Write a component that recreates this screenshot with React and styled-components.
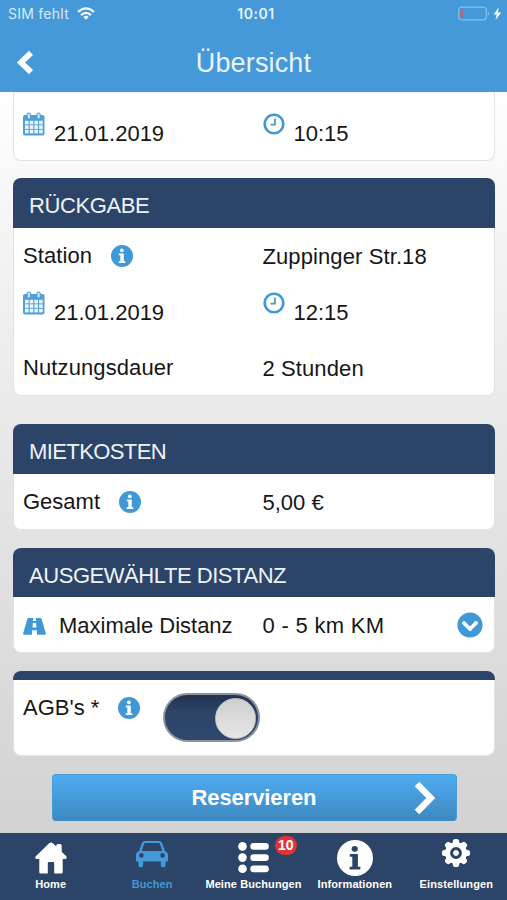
import styled, { createGlobalStyle } from "styled-components"
import { FaChevronCircleDown } from "react-icons/fa"


const GlobalStyle = createGlobalStyle`
    * {
        box-sizing: border-box;
    }

    body {
        margin: 0;
        font-family: "Liberation Sans", Arial, sans-serif;
        color: #161616;
    }
`

const Screen = styled.div`
    display: flex;
    flex-direction: column;
    width: 507px;
    height: 900px;
    overflow: hidden;
    background: linear-gradient(#ffffff 90px, #f7f7f7 190px, #e9e9e9 420px, #dcdcdc 660px, #d2d2d2 833px);
`

const Header = styled.header`
    height: 92px;
    flex-shrink: 0;
    background-color: #4599d9;
    color: white;
`

const StatusBar = styled.div`
    display: grid;
    grid-template-columns: 1fr auto 1fr;
    align-items: center;
    height: 27px;
    padding: 0 5px 0 8px;
    font-family: Inter, "Liberation Sans", sans-serif;
    font-size: 14px;
`

const Carrier = styled.div`
    display: flex;
    align-items: center;
    gap: 8px;
    color: #d9ebf9;
    letter-spacing: .25px;
`

const Clock = styled.div`
    padding-left: 2px;
    font-weight: 600;
    letter-spacing: .5px;
    color: #e6f2fb;
`

const Battery = styled.div`
    display: flex;
    justify-content: flex-end;
    align-items: center;
    margin-right: -3px;
`

const TitleBar = styled.div`
    display: grid;
    grid-template-columns: 60px 1fr 60px;
    align-items: center;
    height: 70px;

    h1 {
        margin: 0;
        padding-top: 2px;
        text-align: center;
        font-size: 27px;
        line-height: 30px;
        font-weight: 400;
        letter-spacing: .15px;
        color: #e8f3fc;
    }
`

const BackButton = styled.button`
    display: flex;
    padding: 0 0 0 16px;
    background: none;
    border: none;
`

const Content = styled.main`
    flex: 1;
    display: flex;
    flex-direction: column;
    padding: 0 12px 0 13px;
`

const Card = styled.section`
    margin-bottom: ${props => props.$gap || 18}px;
    border-radius: ${props => props.$cut ? "0 0 8px 8px" : "8px"};
    background-color: white;
    border: 1px solid #e2e2e2;
    border-top: none;
    flex-shrink: 0;
`

const CardTitle = styled.h2`
    margin: 0 -1px;
    height: ${props => props.$slim ? 9 : 49.5}px;
    padding: 4px 0 0 16px;
    border-radius: 8px 8px 0 0;
    background-color: #2c4468;
    color: #eef3fa;
    font-size: 22px;
    line-height: 47px;
    font-weight: 400;
    letter-spacing: ${props => props.$spacing || -.4}px;
`

const Row = styled.div`
    display: grid;
    grid-template-columns: 239.5px 1fr auto;
    align-items: center;
    height: ${props => props.$height || 55}px;
    margin-top: ${props => props.$top || 0}px;
    padding: 0 11px 0 9px;
    font-size: 22px;
    line-height: 26px;
`

const Cell = styled.div`
    display: flex;
    align-items: center;
    padding-top: ${props => props.$drop || 0}px;
    letter-spacing: ${props => props.$spacing || 0}px;
    white-space: nowrap;

    .info {
        margin-left: 18.5px;
    }

    .road {
        margin-right: 13px;
    }

    .lifted {
        margin: 0 9px 20px 0;
    }
`

const MoreButton = styled.button`
    display: flex;
    padding: 0;
    background: none;
    border: none;
    color: #4098d7;
`

const TermsRow = styled.div`
    display: flex;
    align-items: flex-start;
    height: 75px;
    padding: 15px 9px 0;
    font-size: 22px;
    line-height: 26px;
`

const Toggle = styled.button`
    display: flex;
    justify-content: flex-end;
    align-items: center;
    width: 97px;
    height: 49px;
    margin: -2px 0 0 23px;
    padding: 2px 2px 0 0;
    border: 2px solid #8d929b;
    border-radius: 25px;
    background: linear-gradient(#21334f, #2c4468 35%, #2f486e);

    span {
        width: 41px;
        height: 41px;
        border-radius: 50%;
        border: 1px solid #c4c4c4;
        background: linear-gradient(#cfcfcf, #e6e6e6);
    }
`

const ReserveButton = styled.button`
    display: grid;
    grid-template-columns: 60px 1fr 60px;
    align-items: center;
    width: 405px;
    height: 47px;
    margin-left: 38.5px;
    padding: 0;
    border: 1px solid #459dde;
    border-bottom-color: #3c88c0;
    border-radius: 4px;
    background: linear-gradient(#4fabf0, #3d89c1);
    color: white;
    font: bold 22px/26px "Liberation Sans", Arial, sans-serif;
    letter-spacing: -.1px;

    svg {
        margin-left: 18px;
    }
`

const TabBar = styled.nav`
    display: grid;
    grid-template-columns: repeat(5, 1fr);
    flex-shrink: 0;
    height: 67px;
    background-color: #2c4468;
`

const TabItem = styled.a`
    position: relative;
    display: flex;
    flex-direction: column;
    align-items: center;
    color: ${props => props.$active ? "#4098d7" : "white"};
    font-size: 11px;
    font-weight: bold;
    line-height: 14px;
    letter-spacing: .1px;
    white-space: nowrap;
`

const TabIcon = styled.div`
    display: flex;
    align-items: flex-start;
    height: 44px;
    padding-top: ${props => props.$top}px;
`

const Badge = styled.span`
    position: absolute;
    top: 3px;
    left: 72px;
    width: 22px;
    height: 19px;
    border-radius: 10px;
    background-color: #e03535;
    color: white;
    font-size: 14px;
    line-height: 19px;
    text-align: center;
`

function WifiIcon(){
    return(
        <svg width="18" height="13" viewBox="0 0 18 13" fill="none" stroke="#f4fbff" strokeWidth="2.3">
            <path d="M1 5Q9 -2.2 17 5"/>
            <path d="M4 8.1Q9 3.6 14 8.1"/>
            <path d="M6.3 10L9 12.8L11.7 10Q9 7.7 6.3 10Z" fill="#f4fbff" stroke="none"/>
        </svg>
    )
}

function BatteryIcon(){
    return(
        <svg width="47" height="15" viewBox="0 0 47 15">
            <rect x=".7" y="1.2" width="27.6" height="12.6" rx="3" fill="none" stroke="#7fc4ef" strokeWidth="1.2"/>
            <path d="M29.8 5Q32.3 7.5 29.8 10Z" fill="#7fc4ef"/>
            <rect x="2.4" y="3.2" width="2.4" height="8.6" rx=".8" fill="#c8606f"/>
            <path d="M40.7 1.3L35.6 8.5H38.7L37.4 14L43.3 6.4H39.9Z" fill="#f4fbff"/>
        </svg>
    )
}

function CalendarIcon(){
    return(
        <svg className="lifted" width="22" height="24" viewBox="0 0 22 24">
            <rect x="0" y="3" width="21.5" height="20.5" rx="2" fill="#4f9fd9"/>
            <g fill="#edf6fc">
                {[8.8, 13.3, 17.8].map(y => [2, 6.7, 11.4, 16.1].map(x => (
                    <rect key={x + "-" + y} x={x} y={y} width="3.6" height="3.6"/>
                )))}
            </g>
            <g fill="#d7ebf8" stroke="#4f9fd9" strokeWidth="1.1">
                <rect x="4.2" y="1" width="3.2" height="6" rx="1.6"/>
                <rect x="14" y="1" width="3.2" height="6" rx="1.6"/>
            </g>
        </svg>
    )
}

function ClockIcon(){
    return(
        <svg className="lifted" width="22" height="22" viewBox="0 0 22 22" fill="none" stroke="#4098d7">
            <circle cx="11" cy="11" r="9.3" strokeWidth="2.6"/>
            <path d="M12 5.6V11.7H7.5" strokeWidth="1.7"/>
        </svg>
    )
}

function RoadIcon(){
    return(
        <svg className="road" width="23" height="17" viewBox="0 0 23 17">
            <path d="M5.2 0H17.6Q18.2 0 18.5 .7L22.8 15.2Q23.1 16.8 21.8 16.8H1.2Q-.1 16.8 .2 15.2L4.4 .7Q4.7 0 5.2 0Z" fill="#4098d7"/>
            <path d="M10.2 0H12.8L13 3H10ZM9.9 5.1H13.1L13.4 9.4H9.6ZM9.2 12.2H13.8L14.1 17H8.9Z" fill="white"/>
        </svg>
    )
}

function InfoIcon({ size, color, mark, ...rest }){
    return(
        <svg width={size} height={size} viewBox="0 0 36 36" {...rest}>
            <circle cx="18" cy="18" r="18" fill={color}/>
            <g fill={mark}>
                <ellipse cx="17.7" cy="8.8" rx="3.1" ry="2.9"/>
                <path d="M12.8 14.1H20.9V26.7H23.4V29.5H12.6V26.7H15.3V16.8H12.8Z"/>
            </g>
        </svg>
    )
}

function HomeIcon(){
    return(
        <svg width="32" height="32" viewBox="0 0 32 32" fill="white">
            <path d="M14.2 1.2Q16 -.4 17.8 1.2L21.3 4.5V3.6Q21.3 2 22.9 2H25.1Q26.7 2 26.7 3.6V9.7L31.2 14.3Q32.6 16.3 30.5 16.9H27.7V30.2Q27.7 31.6 26.3 31.6H19.2V21.2Q19.2 20 18 20H14Q12.8 20 12.8 21.2V31.6H5.7Q4.3 31.6 4.3 30.2V16.9H1.5Q-.6 16.3 .8 14.3Z"/>
        </svg>
    )
}

function CarIcon(){
    return(
        <svg width="32" height="27" viewBox="0 0 32 27">
            <path fill="#4599d9" fillRule="evenodd" d="M9 0H23Q25.3 0 26.2 2.2L29 10.1Q32 11.2 32 14.5V19.2Q32 20.6 30.6 20.6H29.6V24Q29.6 26.5 27.2 26.5Q24.8 26.5 24.8 24V20.6H7.2V24Q7.2 26.5 4.8 26.5Q2.4 26.5 2.4 24V20.6H1.4Q0 20.6 0 19.2V14.5Q0 11.2 3 10.1L5.8 2.2Q6.7 0 9 0ZM9.4 2Q8.4 2 8 3.1L5.9 9.9H26.1L24 3.1Q23.6 2 22.6 2Z"/>
            <circle cx="5.4" cy="14.4" r="2.3" fill="#2c4468"/>
            <circle cx="26.6" cy="14.4" r="2.3" fill="#2c4468"/>
        </svg>
    )
}

function ListIcon(){
    return(
        <svg width="31" height="32" viewBox="0 0 31 32" fill="white">
            {[4.4, 15.6, 26.8].map(y => (
                <g key={y}>
                    <circle cx="4.5" cy={y} r="4.3"/>
                    <rect x="12.3" y={y - 3.4} width="18.5" height="6.8" rx="3.2"/>
                </g>
            ))}
        </svg>
    )
}

function GearIcon(){
    return(
        <svg width="28" height="28" viewBox="-14 -14 28 28" fill="white">
            {[0, 45, 90, 135, 180, 225, 270, 315].map(angle => (
                <path key={angle} transform={`rotate(${angle})`} d="M-4 -8L-2.8 -12.7Q-2.4 -14 -1.2 -14H1.2Q2.4 -14 2.8 -12.7L4 -8Z"/>
            ))}
            <circle r="10.8"/>
            <circle r="4.4" fill="none" stroke="#2c4468" strokeWidth="3"/>
        </svg>
    )
}

function Info(){
    return <InfoIcon className="info" size={22} color="#4098d7" mark="white"/>
}

function DateRow(props){
    return(
        <Row $top={props.top}>
            <Cell $drop={2}><CalendarIcon/>21.01.2019</Cell>
            <Cell $drop={2}><ClockIcon/>{props.time}</Cell>
        </Row>
    )
}

function Tab(props){
    return(
        <TabItem $active={props.active}>
            <TabIcon $top={props.top}>{props.icon}</TabIcon>
            {props.badge && <Badge>{props.badge}</Badge>}
            {props.text}
        </TabItem>
    )
}

function App(){
    return(
        <>
            <GlobalStyle/>
            <Screen>
                <Header>
                    <StatusBar>
                        <Carrier>SIM fehlt <WifiIcon/></Carrier>
                        <Clock>10:01</Clock>
                        <Battery><BatteryIcon/></Battery>
                    </StatusBar>
                    <TitleBar>
                        <BackButton aria-label="Zurück">
                            <svg width="18" height="25" viewBox="0 0 18 25" fill="none" stroke="white" strokeWidth="5.8">
                                <path d="M15 2.8L5 12.5L15 22.2"/>
                            </svg>
                        </BackButton>
                        <h1>Übersicht</h1>
                    </TitleBar>
                </Header>

                <Content>
                    <Card $cut $gap={17}>
                        <DateRow time="10:15" top={13}/>
                    </Card>

                    <Card $gap={28.5}>
                        <CardTitle>RÜCKGABE</CardTitle>
                        <Row $height={57}>
                            <Cell $spacing={.1}>Station<Info/></Cell>
                            <Cell $drop={1} $spacing={.1}>Zuppinger Str.18</Cell>
                        </Row>
                        <DateRow time="12:15"/>
                        <Row>
                            <Cell $drop={1} $spacing={.1}>Nutzungsdauer</Cell>
                            <Cell $drop={3} $spacing={.1}>2 Stunden</Cell>
                        </Row>
                    </Card>

                    <Card>
                        <CardTitle $spacing={-.6}>MIETKOSTEN</CardTitle>
                        <Row>
                            <Cell $drop={2}>Gesamt<Info/></Cell>
                            <Cell $drop={3}>5,00 €</Cell>
                        </Row>
                    </Card>

                    <Card>
                        <CardTitle $spacing={-.45}>AUSGEWÄHLTE DISTANZ</CardTitle>
                        <Row>
                            <Cell $drop={3}><RoadIcon/>Maximale Distanz</Cell>
                            <Cell $drop={3} $spacing={.3}>0 - 5 km KM</Cell>
                            <MoreButton aria-label="Distanz wählen"><FaChevronCircleDown size={26}/></MoreButton>
                        </Row>
                    </Card>

                    <Card>
                        <CardTitle $slim/>
                        <TermsRow>
                            <Cell>AGB's *<Info/></Cell>
                            <Toggle role="switch" aria-checked="true" aria-label="AGB"><span/></Toggle>
                        </TermsRow>
                    </Card>

                    <ReserveButton>
                        <span/>
                        Reservieren
                        <svg width="22" height="34" viewBox="0 0 22 34" fill="none" stroke="white" strokeWidth="6.4">
                            <path d="M3 3L16.8 17L3 31"/>
                        </svg>
                    </ReserveButton>
                </Content>

                <TabBar>
                    <Tab text="Home" top={9} icon={<HomeIcon/>}/>
                    <Tab text="Buchen" top={8} icon={<CarIcon/>} active/>
                    <Tab text="Meine Buchungen" top={9} icon={<ListIcon/>} badge="10"/>
                    <Tab text="Informationen" top={7} icon={<InfoIcon size={36} color="white" mark="#2c4468"/>}/>
                    <Tab text="Einstellungen" top={6} icon={<GearIcon/>}/>
                </TabBar>
            </Screen>
        </>
    )
}

export default App
